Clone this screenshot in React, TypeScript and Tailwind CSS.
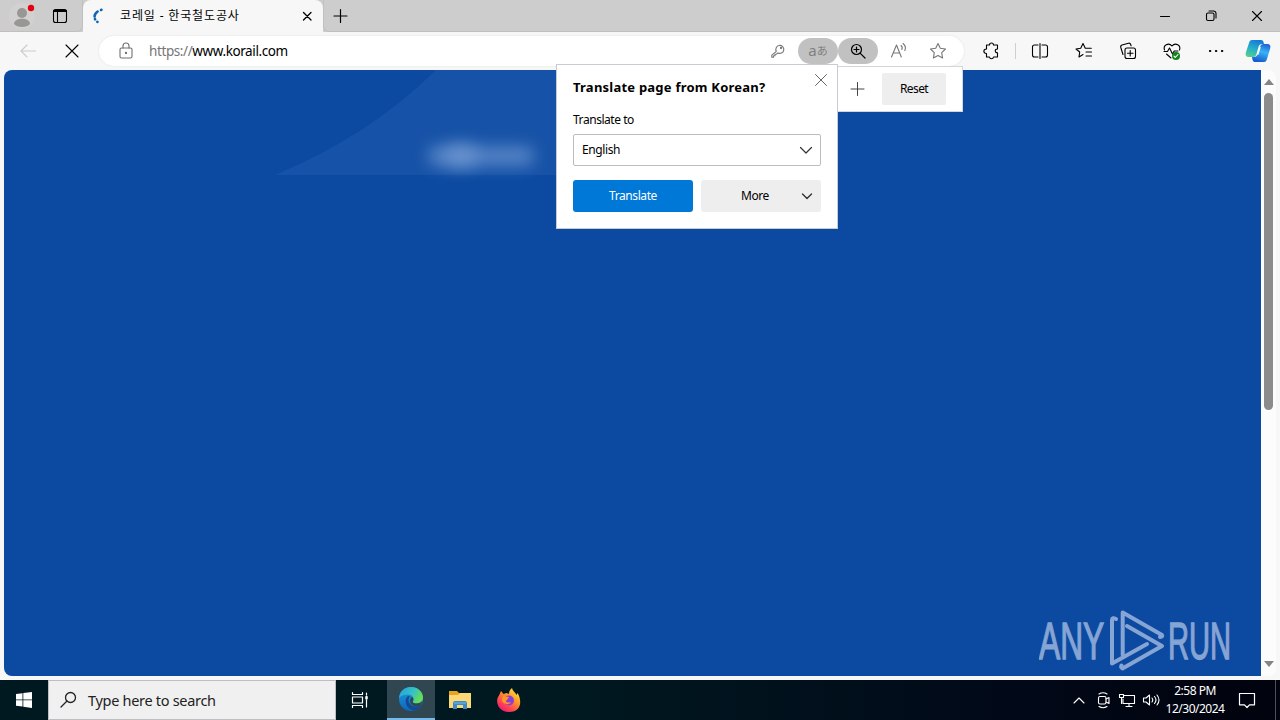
import React from "react";

type IconProps = {
    size?: number;
    w?: number;
    className?: string;
    children: React.ReactNode;
};

function Icon({ size = 20, w = 1.1, className = "", children }: IconProps) {
    return (
        <svg
            width={size}
            height={size}
            viewBox={`0 0 ${size} ${size}`}
            fill="none"
            stroke="currentColor"
            strokeWidth={w}
            strokeLinecap="round"
            strokeLinejoin="round"
            className={`shrink-0 ${className}`}
        >
            {children}
        </svg>
    );
}

const STAR = "M10 2.5l2.3 4.8 5.2.7-3.8 3.7.9 5.3-4.6-2.5-4.6 2.5.9-5.3L2.5 8l5.2-.7z";

function TabStrip() {
    return (
        <div className="flex h-8 shrink-0 bg-[#cdcdcd]">
            <div className="flex w-[83px] items-center rounded-br-md border-r border-b border-[#c0c0c0]">
                <Icon size={32} className="ml-[6px]">
                    <circle cx="16" cy="16" r="13" fill="#d3d1d0" stroke="none" />
                    <circle cx="16" cy="13" r="5" fill="#999795" stroke="none" />
                    <path d="M8 24c0-7 16-7 16 0-3 4-13 4-16 0z" fill="#999795" stroke="none" />
                    <circle cx="25" cy="8" r="3.2" fill="#e3000f" stroke="none" />
                </Icon>
                <Icon size={20} className="ml-3 text-black">
                    <rect x="3.5" y="3.5" width="13" height="13" rx="2" />
                    <path d="M4 5h12" strokeWidth="2" />
                    <path d="M7.5 6v10" />
                </Icon>
            </div>
            <div className="flex w-[240px] items-center rounded-t-lg bg-[#f7f7f7] text-black">
                <Icon size={16} w={2.6} className="ml-[9px] text-[#1267b4]">
                    <path d="M9.5 1.8L9 2M5.6 3.5C3.5 5 2.5 7 2.6 8.5M3 11l.1.3M5.3 13.800l.2.1" />
                </Icon>
                <span className="ml-3 w-[170px] text-[12px] tracking-[0.85px] whitespace-nowrap">코레일 - 한국철도공사</span>
                <Icon size={16} w={1.3} className="ml-[9px]">
                    <path d="M4.5 4.5l7.5 7.5M12 4.5L4.5 12" />
                </Icon>
            </div>
            <div className="flex flex-1 items-center rounded-bl-md border-b border-l border-[#c0c0c0] text-black">
                <Icon size={16} w={1.2} className="ml-[8px]">
                    <path d="M8.5 1.5v13M2 8h13" />
                </Icon>
                <div className="ml-auto flex items-center gap-[30px] pr-[15px]">
                    <Icon size={16}>
                        <path d="M3.5 8.5h9" />
                    </Icon>
                    <Icon size={16}>
                        <rect x="3.5" y="5" width="7.5" height="7.5" rx="1.5" />
                        <path d="M6 3h4.5a2.5 2.5 0 0 1 2.5 2.5V10" />
                    </Icon>
                    <Icon size={16}>
                        <path d="M3.5 3.5l9 9M12.5 3.5l-9 9" />
                    </Icon>
                </div>
            </div>
        </div>
    );
}

function AddressBar() {
    return (
        <div className="flex h-[30px] w-[865px] items-center rounded-full bg-white pl-[17px] pr-[6px] shadow-[0_0_2px_#dddddd]">
            <Icon className="text-[#707070]">
                <rect x="4" y="7" width="12" height="10" rx="1.5" />
                <path d="M7 7V5a3 3 0 0 1 6 0v2" />
                <circle cx="10" cy="12" r=".6" fill="currentColor" />
            </Icon>
            <div className="ml-[13px] text-[13.5px] tracking-[-0.400px] text-black">
                <span className="text-[#767676]">https://</span>www.korail.com
            </div>
            <div className="ml-auto flex items-center text-[#777777]">
                <div className="flex w-10 justify-center">
                    <Icon size={16}>
                        <path d="M6.300 8.300a4 4 0 1 1 1.600 1.600L6.500 11.200H5v1.500H3.500v1.500H1.800v-2z" />
                        <circle cx="11" cy="5" r=".6" />
                    </Icon>
                </div>
                <div className="flex h-[26px] w-10 items-center justify-center rounded-full bg-[#c1c1c1] pb-[2px] text-[#808080]">
                    <span className="text-[15px] leading-none">a</span>
                    <span className="text-[11px] leading-none">あ</span>
                </div>
                <div className="flex h-[26px] w-10 items-center justify-center rounded-full bg-[#c1c1c1] text-black">
                    <Icon w={1.2}>
                        <circle cx="8.5" cy="8.5" r="5" />
                        <path d="M12.3 12.3l4.7 4.7M8.500 6v5M6 8.500h5" />
                    </Icon>
                </div>
                <div className="flex w-10 justify-center">
                    <Icon>
                        <path d="M3.500 16L8.500 4l4.800 12M5.300 12h6.500M13 4.500c1.300 1 1.500 2.500.8 4M15 2.500c2.500 2 3 4.500 1.800 7" />
                    </Icon>
                </div>
                <div className="flex w-10 justify-center">
                    <Icon>
                        <path d={STAR} />
                    </Icon>
                </div>
            </div>
        </div>
    );
}

function Copilot() {
    return (
        <svg width="26" height="26" viewBox="0 0 26 26" className="shrink-0">
            <defs>
                <linearGradient id="cpl" x1=".6" y1="0" x2=".2" y2="1">
                    <stop offset="0" stopColor="#1678d8" />
                    <stop offset=".5" stopColor="#24b0c8" />
                    <stop offset="1" stopColor="#58cf8c" />
                </linearGradient>
                <linearGradient id="cpr" x1=".6" y1="0" x2=".3" y2="1">
                    <stop offset="0" stopColor="#2067d8" />
                    <stop offset=".4" stopColor="#36b4f5" />
                    <stop offset="1" stopColor="#1455cc" />
                </linearGradient>
            </defs>
            <path d="M7 2h9c2 0 2.500 1.500 3 4h-2c-2 0-3 1-3.500 3L11.500 16c-.6 2-1.500 3-3.500 3H4c-3 0-4-1.500-3-5L4 5c.6-2 1.300-3 3-3z" fill="url(#cpl)" />
            <path d="M19 24h-9c-2 0-2.500-1.500-3-5h2c2 0 3-1 3.500-3L15 9c.5-2 1.500-3 3.500-3H22c3 0 4 1.500 3 5l-3 10c-.6 2-1.300 3-3 3z" fill="url(#cpr)" />
            <path d="M14.800 9.500l-2 6.500" stroke="white" strokeWidth="1.600" strokeLinecap="round" />
        </svg>
    );
}

function Toolbar() {
    return (
        <div className="flex h-[38px] shrink-0 items-center bg-[#f7f7f7]">
            <Icon className="ml-[18px] text-[#cccccc]">
                <path d="M17.500 10H3M9 4l-6 6 6 6" />
            </Icon>
            <Icon w={1.1} className="mr-[17px] ml-6 text-black">
                <path d="M4 4l12 12M16 4L4 16" />
            </Icon>
            <AddressBar />
            <div className="ml-[17px] flex items-center text-black">
                <Icon w={1.1}>
                    <path d="M5.500 4h3c0-2.700 4-2.700 4 0h4v4c-3-.3-3 4 0 3.800V16h-4c-.3 2.300-3.700 2.300-4 0h-3v-3.500c-3.500 0-3.500-4.500 0-4.500z" />
                </Icon>
                <div className="ml-[14px] h-4 w-px bg-[#cfcfcf]" />
                <div className="ml-[14px] flex gap-6">
                    <Icon w={1.1}>
                        <path d="M8 4H4.500Q2.500 4 2.500 6v8q0 2 2 2H8M10 2.500v15M12 4h3.500q2 0 2 2v8q0 2-2 2H12" />
                    </Icon>
                    <Icon w={1.1}>
                        <path d="M9 13.500l-4 2.500.7-5L2 8l4.700-.8L9 2.500l2.300 4.700h6M12 11h5.500M12 15h5.500" />
                    </Icon>
                    <Icon w={1.1}>
                        <rect x="7" y="7" width="10.5" height="10.5" rx="2" />
                        <path d="M12.200 9.500v5.500M9.500 12.200H15M5 13.500L2.800 6.500Q2.300 4.500 4 4l6.500-1.800q1.700-.3 2.200 1.300l.4 1.300" />
                    </Icon>
                    <Icon w={1.1}>
                        <path d="M2.500 9C.8 4.500 6.500 1 10 5c3.500-4 9.200-.5 7.500 4M2 10.500h3.500L7.500 7l3 6 1.700-3H16M4.500 13l4.500 4" />
                        <circle cx="14" cy="15" r="4" fill="#12831d" stroke="none" />
                        <path d="M12 15.200l1.300 1.300 2.700-3" stroke="white" />
                    </Icon>
                    <Icon w={1}>
                        <circle cx="4" cy="10" r=".7" fill="currentColor" />
                        <circle cx="10" cy="10" r=".7" fill="currentColor" />
                        <circle cx="16" cy="10" r=".7" fill="currentColor" />
                    </Icon>
                </div>
            </div>
            <div className="ml-[19px] flex">
                <Copilot />
            </div>
        </div>
    );
}

function Watermark() {
    return (
        <svg width="200" height="70" viewBox="0 0 200 70" className="absolute right-[22px] bottom-[1px]">
            <g fill="#86a4d4" stroke="#86a4d4" strokeWidth="1.4" fontFamily="'Liberation Sans', sans-serif" fontSize="52">
                <text transform="translate(0 54) scale(.61 1)">ANY</text>
                <text transform="translate(129 54) scale(.56 1)">RUN</text>
            </g>
            <g fill="none" stroke="#86a4d4" strokeWidth="4" strokeLinejoin="round" strokeLinecap="round">
                <path d="M83.700 50V7.500L123 30q1 1.500-2 2" />
                <path d="M88 21l35 20-39.500 22.500q-2-1-1-3" />
                <path d="M77 14q-4-2-4 1v43.500L108 39" />
            </g>
        </svg>
    );
}

function TranslatePopup() {
    return (
        <div className="absolute top-[64px] left-[556px] z-20 flex h-[165px] w-[282px] flex-col border border-[#c8ccd2] bg-white px-4 text-[12px] text-black">
            <div className="mt-3 h-5 text-[13px] leading-5 font-bold tracking-[0.23px] whitespace-nowrap">Translate page from Korean?</div>
            <Icon size={16} w={1} className="absolute top-[7px] right-2 text-[#666666]">
                <path d="M2.500 2.500l11 11M13.500 2.500l-11 11" />
            </Icon>
            <div className="mt-[15px] h-4 leading-4 tracking-[-0.45px]">Translate to</div>
            <div className="mt-[6px] flex h-8 shrink-0 items-center justify-between rounded-[2px] border border-[#bdbdbd] pr-[7px] pl-2 tracking-[-0.4px]">
                English
                <Icon size={14} w={1.2} className="text-[#333333]">
                    <path d="M1.500 4.500L7 10l5.500-5.500" />
                </Icon>
            </div>
            <div className="mt-[14px] flex gap-2 tracking-[-0.42px]">
                <button className="h-8 w-[120px] rounded-[3px] bg-[#0078d7] text-white">Translate</button>
                <button className="flex h-8 w-[120px] items-center rounded-[3px] bg-[#eeeeee] pr-2 pl-10">
                    More
                    <Icon size={12} w={1.4} className="ml-auto text-[#333333]">
                        <path d="M1.500 4L6 8.500 10.500 4" />
                    </Icon>
                </button>
            </div>
        </div>
    );
}

function ZoomPopup() {
    return (
        <div className="absolute top-[66px] left-[780px] z-10 flex h-[46px] w-[183px] items-center justify-end border border-[#d5d5d5] bg-white pr-4 text-black">
            <Icon size={16} w={1} className="mr-4 text-[#444444]">
                <path d="M7.500 1.500v13M1 8h13" />
            </Icon>
            <button className="h-8 w-16 rounded-[2px] bg-[#eeeeee] text-[12px] tracking-[-0.6px]">Reset</button>
        </div>
    );
}

function Page() {
    return (
        <div className="flex h-[610px] shrink-0 bg-[#f7f7f7] pr-1 pb-1 pl-1">
            <div className="relative w-[1257px] overflow-hidden rounded-l-lg bg-[#0c4aa1]">
                <svg width="640" height="106" viewBox="0 0 640 106" className="absolute top-0 left-0">
                    <path d="M271 105Q365 66 432 0H640V105z" fill="#1652a7" />
                </svg>
                <div className="absolute top-[76px] left-[424px] h-[20px] w-[106px] rounded-lg bg-[#6f98d2] opacity-70 blur-[8px]" />
                <div className="absolute top-[73px] left-[442px] h-[25px] w-[30px] rounded-lg bg-[#86a9dc] opacity-45 blur-[8px]" />
                <Watermark />
            </div>
            <div className="flex w-[15px] flex-col items-center rounded-r-lg bg-[#fcfcfc] text-[#858585]">
                <svg width="10" height="6" className="mt-[9px] shrink-0">
                    <path d="M0 6L5 0l5 6z" fill="currentColor" />
                </svg>
                <div className="mt-2 h-[317px] w-[9px] rounded-full bg-[#8b8b8b]" />
                <svg width="10" height="6" className="mt-auto mb-[9px] shrink-0">
                    <path d="M0 0h10L5 6z" fill="currentColor" />
                </svg>
            </div>
        </div>
    );
}

function EdgeLogo() {
    return (
        <svg width="26" height="26" viewBox="0 0 26 26">
            <defs>
                <linearGradient id="edge-top" x1="0" y1="0" x2="1" y2=".4">
                    <stop offset="0" stopColor="#269fd8" />
                    <stop offset=".6" stopColor="#35c1c8" />
                    <stop offset="1" stopColor="#67dc57" />
                </linearGradient>
                <linearGradient id="edge-low" x1="0" y1="0" x2="0" y2="1">
                    <stop offset="0" stopColor="#1b9de2" />
                    <stop offset="1" stopColor="#1064bd" />
                </linearGradient>
            </defs>
            <circle cx="13" cy="13" r="12" fill="url(#edge-low)" />
            <path d="M1 12C2 4.500 7 1 13 1c7 0 12 5 12 10.500 0 4-3 6-6.500 6-3 0-4.500-1-3.500-2.500 2-3-1-6.500-5-6.500C6 8.500 2.500 10 1 12z" fill="url(#edge-top)" />
            <path d="M10 10c-5 4-2 13 6 14.700 3-.7 5.500-2.700 7-5.200-5 2.500-12 .5-12.500-5-.1-2 .6-3.300 1.500-4z" fill="#134b91" />
            <path d="M15 15c-1 1.500.5 2.500 3.500 2.500 2.500 0 4.500-1 5.600-2.700L23 19.500c-5 2-11 0-11-5 0-1.500 1-3 2-3.500 1.300 1 1.800 2.500 1 4z" fill="#304751" />
        </svg>
    );
}

function Taskbar() {
    return (
        <div className="flex h-10 shrink-0 bg-[linear-gradient(90deg,#001820_0%,#001820_45%,#010817_80%,#01030d_100%)] text-white">
            <div className="flex w-12 items-center justify-center">
                <svg width="16" height="16" viewBox="0 0 16 16" fill="white">
                    <path d="M0 2l6.500-.8v6.300H0zM7.300 1.100L16 0v7.500H7.300zM0 8.300h6.500v6.300L0 13.800zM7.300 8.300H16V16l-8.700-1.200z" />
                </svg>
            </div>
            <div className="flex w-72 items-center border border-[#c1bdc4] bg-[#f0f0f0] pl-[11px] text-[#222222]">
                <Icon size={18} w={1.3}>
                    <circle cx="10.500" cy="6.500" r="5" />
                    <path d="M7 10L1 16" />
                </Icon>
                <span className="ml-[10px] pt-[2px] text-[14.5px] tracking-[-0.300px]">Type here to search</span>
            </div>
            <div className="flex w-[51px] items-center justify-center pr-[3px]">
                <Icon size={18} w={1.2}>
                    <path d="M1.500 1.500v2h10v-2M1.500 16.500v-2h10v2M1.500 6h10v6h-10zM15.500 2v2M15.500 9v7" />
                    <path d="M15.500 6v1.500" strokeWidth="2.500" />
                </Icon>
            </div>
            <div className="flex w-12 items-center justify-center border-b-2 border-[#76b9ed] bg-[#304751]">
                <EdgeLogo />
            </div>
            <div className="flex w-[49px] items-center justify-center">
                <svg width="22" height="20" viewBox="0 0 22 20">
                    <path d="M0 1h8l2 2h11v5H0z" fill="#e8a524" />
                    <path d="M0 5h9l2-2h11v15H0z" fill="#fcd975" />
                    <path d="M4 19v-6q0-2 2-2h10q2 0 2 2v6h-4v-4H8v4z" fill="#3c8cc9" />
                    <path d="M5 13h12" stroke="#75b8e8" />
                </svg>
            </div>
            <div className="flex w-12 items-center justify-center pl-[2px]">
                <svg width="24" height="24" viewBox="0 0 24 24">
                    <defs>
                        <linearGradient id="fox" x1=".9" y1="0" x2=".2" y2="1">
                            <stop offset="0" stopColor="#fff24a" />
                            <stop offset=".4" stopColor="#ff9a28" />
                            <stop offset=".75" stopColor="#ff4053" />
                            <stop offset="1" stopColor="#e9157b" />
                        </linearGradient>
                    </defs>
                    <path d="M4 3l2.500 3 3-1L12 6c0-3 1-4.500 3-6 .5 3 3 4 4.500 7l1-2C25 12 25 24 12 24 0 24-2 12 2 7.500z" fill="url(#fox)" />
                    <circle cx="12" cy="12.500" r="5" fill="#8b3fd2" />
                    <path d="M6 8l6 1-2 3c-2 .5-1 2.500 1 2.500h3c-2 3-9 2-9-3z" fill="#ff9628" />
                </svg>
            </div>
            <div className="ml-auto flex items-center">
                <Icon size={14}>
                    <path d="M2 10l5-5 5 5" />
                </Icon>
                <Icon size={18} className="ml-[9px]">
                    <rect x="3.500" y="5.500" width="7.500" height="7.500" rx="1.500" />
                    <path d="M11 8l3-1.500v6L11 11M4 3q4-2.500 8 0M4 15.500q4 2.500 8 0" />
                </Icon>
                <Icon size={18} className="ml-[5px]">
                    <path d="M6 4.500h10.500v8H5V8M8 15.500h6M11 12.500v3M1.500 3.500h4v3h-4zM3.500 6.500v6" />
                </Icon>
                <Icon size={18} className="ml-[6px]">
                    <path d="M1.500 7v4H4l3.500 3V4L4 7zM10 7q1.500 2 0 4M12.500 5.500q3 3.500 0 7M15 4q4 5 0 10" />
                </Icon>
                <div className="ml-[5px] w-[60px] text-center text-[12px] leading-[18px] tracking-[-0.5px] whitespace-nowrap">
                    <div>2:58 PM</div>
                    <div>12/30/2024</div>
                </div>
                <Icon size={18} w={1.2} className="ml-[13px]">
                    <path d="M1.500 2.500h15v11.300h-5L9 16.500l-2.500-2.700h-5z" />
                </Icon>
                <div className="ml-[19px] h-10 w-[5px] border-l border-[#4c505a]" />
            </div>
        </div>
    );
}

export default function App() {
    return (
        <div className="relative flex h-[720px] w-[1280px] flex-col overflow-hidden font-['Noto_Sans','Noto_Sans_CJK_KR',sans-serif]">
            <TabStrip />
            <Toolbar />
            <Page />
            <Taskbar />
            <ZoomPopup />
            <TranslatePopup />
        </div>
    );
}
